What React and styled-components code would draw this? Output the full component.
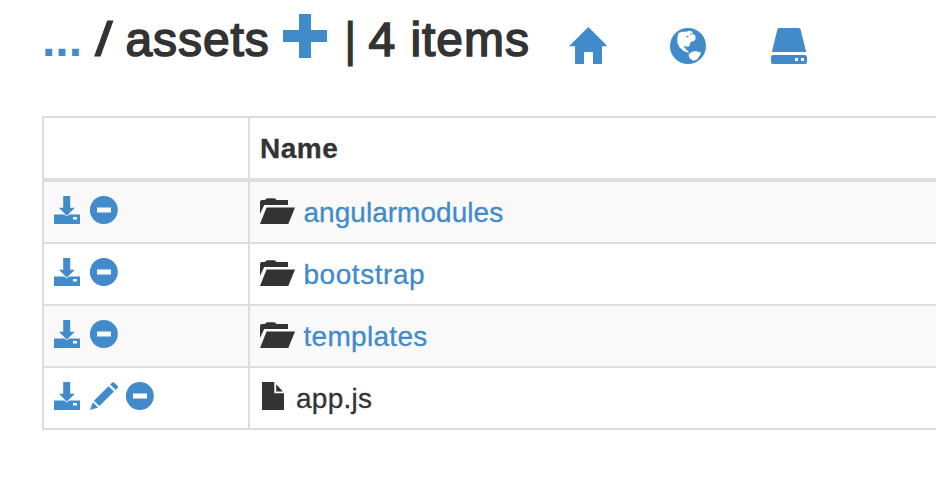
import React from 'react';
import styled, { createGlobalStyle } from 'styled-components';

const Global = createGlobalStyle`
  * { box-sizing: border-box; }
  body { margin: 0; background: #fff; color: #333; overflow: hidden;
    font-family: "Liberation Sans", Arial, sans-serif; }
`;
const Page = styled.main`
  height: 486px;
  padding-left: 42px;
  overflow: hidden;
`;
const Header = styled.header`
  display: flex;
  align-items: flex-start;
  height: 116px;
`;
const Title = styled.h1`
  display: flex;
  margin: 0;
  width: 527px;
  font-size: 48px;
  font-weight: 400;
  line-height: 52px;
  padding-top: 14px;
  white-space: pre;
`;
const Part = styled.span`
  flex: none;
  width: ${(p) => p.$w}px;
  letter-spacing: ${(p) => p.$ls || 0}px;
  -webkit-text-stroke: ${(p) => p.$stroke ?? 1.6}px currentColor;
`;
const Parent = styled.a`
  flex: none;
  width: 53px;
  color: #428bca;
  font-weight: 700;
`;
const Slash = styled(Part)`
  transform: scaleX(1.32);
  transform-origin: 0 0;
`;
const Svg = styled.svg`
  display: block;
  flex: none;
  fill: currentColor;
`;
const AddButton = styled.a`
  width: 61px;
  color: #428bca;
`;
const Nav = styled.nav`
  display: flex;
  gap: 63px;
  padding-top: 27px;
  color: #428bca;
`;
const Table = styled.div`
  width: 1000px;
  border: 2px solid #ddd;
  border-bottom: 0;
  font-size: 28px;
  line-height: 40px;
`;
const Row = styled.div`
  display: grid;
  grid-template-columns: 206px 1fr;
  height: ${(p) => (p.$head ? 64 : 62)}px;
  border-bottom: ${(p) => (p.$head ? 4 : 2)}px solid #ddd;
  background: ${(p) => (p.$odd ? '#f9f9f9' : '#fff')};
  font-weight: ${(p) => (p.$head ? 700 : 400)};
`;
const Actions = styled.div`
  display: flex;
  gap: 8px;
  padding: 14px 10px 0;
  border-right: 2px solid #ddd;
  color: #428bca;
`;
const NameCell = styled.div`
  display: flex;
  padding: 11px 10px 0;
`;
const IconSlot = styled.span`
  width: ${(p) => (p.$file ? 36 : 43.5)}px;
  padding: ${(p) => (p.$file ? '3px 0 0 2px' : '5px 0 0')};
`;
const Label = styled.span`
  color: ${(p) => (p.$link ? '#428bca' : '#333')};
  letter-spacing: ${(p) => p.$ls || 0}px;
  -webkit-text-stroke: 0.3px currentColor;
`;

const Download = () => (
  <Svg width="28" height="28" viewBox="0 0 28 28">
    <path d="M9.2 0h7v11.8h4.6l-8 7.9-7.8-7.9h4.2z" />
    <path fillRule="evenodd" d="M0 18.4h10.2l2.6 2 2.6-2H26V28H0zM19 21v2.4h4V21z" />
  </Svg>
);
const Minus = () => (
  <Svg width="28" height="28" viewBox="0 0 28 28">
    <path fillRule="evenodd" d="M13.8 0a14 14 0 1 1 0 28 14 14 0 0 1 0-28zM7 11.5v5h14v-5z" />
  </Svg>
);
const Pencil = () => (
  <Svg width="28" height="28" viewBox="0 0 28 28">
    <path d="M22 .8q1.3-1.2 2.5 0l3 3q1 1.2 0 2.3l-1.8 1.8-5.5-5.4zM18.5 4.2l5.5 5.4L9.4 24.1l-5.5-5.4zM2.9 20.2l5.2 5.2L0 28z" />
  </Svg>
);
const Folder = () => (
  <Svg width="36" height="28" viewBox="0 0 36 28">
    <path d="M0 16V4q0-2 2-2h3q.7-1.7 2.5-1.7h6Q16 .3 16.5 2H28v5H4.2z" />
    <path d="M6.6 9.4H35L28.3 26H0z" />
  </Svg>
);
const File = () => (
  <Svg width="22" height="28" viewBox="0 0 22 28">
    <path d="M0 0h12.3v11.2H22V28H0zM14.2 2.2l6.7 7.2h-6.7z" />
  </Svg>
);
const Home = () => (
  <Svg width="38" height="38" viewBox="0 0 38 38">
    <path d="M19.3 0 38.5 19.2H33V37h-9V25h-9v12H6V19.2H0z" />
  </Svg>
);
const Globe = () => (
  <Svg width="38" height="38" viewBox="0 -1 38 38">
    <circle cx="18" cy="18" r="18" />
    <path fill="#fff" d="M8.2 5.2 12 3.7l4.5.1 2.2-1 3.4.5.6 2.7 2.7 1.6.1 4-2 1.6-2.3.4-1.2 2-.6 2.6-2.6.5-1.6.9.8 1.8 1.9 1.6 1.2 2.1-5.4-2.2-3.9-3.2-2.3-4.5L7.3 11z" />
    <path fill="#fff" d="M18.6 26.8 20.7 24.4l4-1.5 6 1.3-.4 2.6-3.3 4.6-3.4 1.4-2.6-1.4-1.8-2.2z" />
    <path d="m16 8.4 2-1 .8 1.3-1.3.7zM20.2 5.3l1.6.3-.5 1.2-1.3-.3zM13.6 19l1.6-1 1.6.6-.2 1.2-1.2-.5-1.2.7z" />
  </Svg>
);
const Drive = () => (
  <Svg width="38" height="38" viewBox="0 -1 38 38">
    <path d="M8.4 0h19.2q1.6 0 2 1.5L35.2 24H.8L6.4 1.5Q6.8 0 8.4 0z" />
    <path fillRule="evenodd" d="M2 27h32q2 0 2 2v5q0 2-2 2H2q-2 0-2-2v-5q0-2 2-2zm22 3v3h3v-3zm6 0v3h3v-3z" />
  </Svg>
);

const ITEMS = [
  { name: 'angularmodules', folder: true, ls: 0.03 },
  { name: 'bootstrap', folder: true, ls: 0.55 },
  { name: 'templates', folder: true, ls: 0.3 },
  { name: 'app.js', ls: 0.25 },
];

export default function App() {
  return (
    <Page>
      <Global />
      <Header>
        <Title>
          <Parent>...</Parent>
          <Slash $w={30.5} $stroke={1}>/</Slash>
          <Part $w={157.5} $ls={0.9}>assets</Part>
          <AddButton>
            <Svg width="44" height="44" viewBox="0 0 44 44">
              <path d="M16 0h12v16h16v12H28v16H16V28H0V16h16z" />
            </Svg>
          </AddButton>
          <Part $w={24.5} $stroke={1}>|</Part>
          <Part $w={170} $ls={0.95}>4 items</Part>
        </Title>
        <Nav>
          <Home />
          <Globe />
          <Drive />
        </Nav>
      </Header>
      <Table>
        <Row $head>
          <Actions />
          <NameCell><Label $ls={0.5}>Name</Label></NameCell>
        </Row>
        {ITEMS.map((item, i) => (
          <Row key={item.name} $odd={i % 2 === 0}>
            <Actions>
              <Download />
              {!item.folder && <Pencil />}
              <Minus />
            </Actions>
            <NameCell>
              <IconSlot $file={!item.folder}>{item.folder ? <Folder /> : <File />}</IconSlot>
              <Label $link={item.folder} $ls={item.ls}>{item.name}</Label>
            </NameCell>
          </Row>
        ))}
      </Table>
    </Page>
  );
}
